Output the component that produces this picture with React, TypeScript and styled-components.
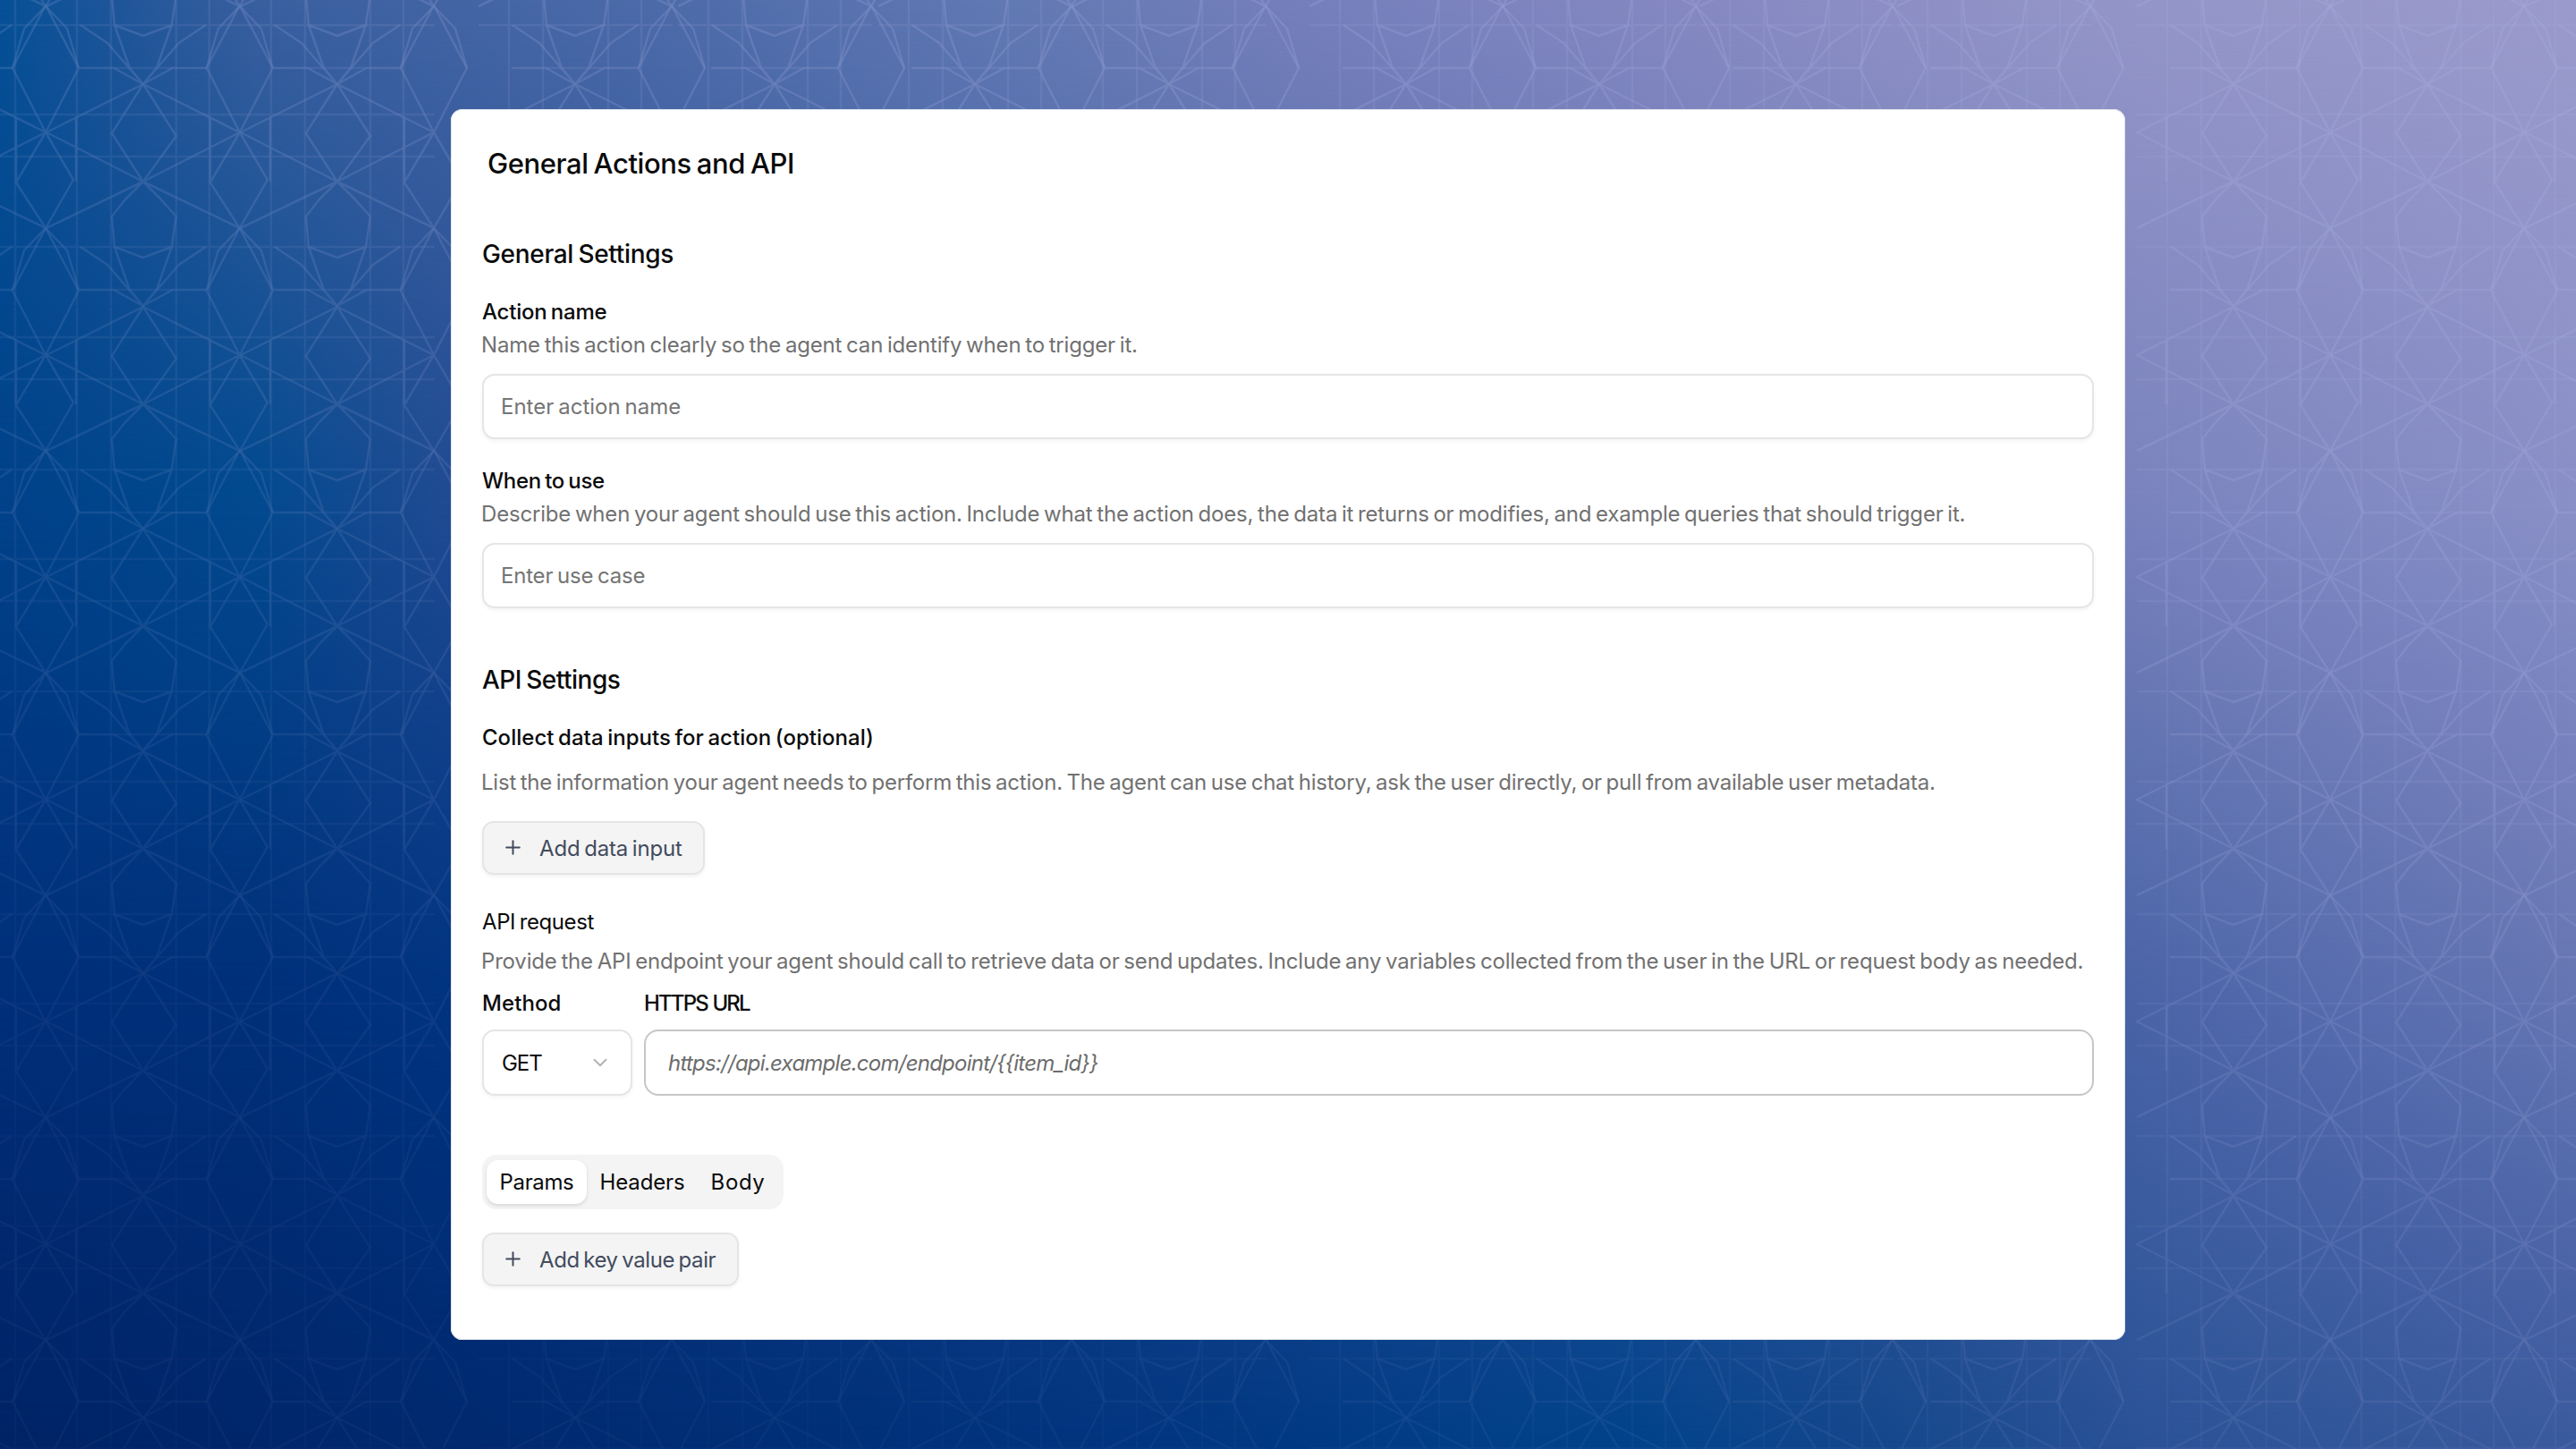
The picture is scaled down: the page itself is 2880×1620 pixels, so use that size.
import React, { useState } from "react";
import styled, { createGlobalStyle } from "styled-components";
import { ChevronDown, Plus } from "lucide-react";

const GlobalStyle = createGlobalStyle`
  * {
    box-sizing: border-box;
  }
  body {
    margin: 0;
    font-family: "Inter", sans-serif;
    font-size: 24px;
    color: #0b0b0c;
    word-spacing: -1.8px;
  }
  button,
  input {
    font: inherit;
    word-spacing: inherit;
  }
`;

const Page = styled.main`
  position: relative;
  width: 100%;
  min-width: 2880px;
  height: 1620px;
  display: flex;
  align-items: center;
  justify-content: center;
  overflow: hidden;
`;

const Backdrop = styled.div`
  position: absolute;
  inset: 0;
`;

const Wash = styled.div<{ $colors: string; $from?: number; $to?: number }>`
  position: absolute;
  inset: 0;
  background: linear-gradient(90deg, ${(props) => props.$colors});
  ${(props) =>
    props.$to &&
    `mask-image: linear-gradient(180deg, #000 ${props.$from}%, transparent ${props.$to}%);`}
`;

const Lines = styled.svg`
  position: absolute;
  inset: 0;
  width: 100%;
  height: 100%;
  fill: none;
  stroke: #a9b0e2;
  stroke-linejoin: round;
  mask-image: linear-gradient(
    20deg,
    rgba(0, 0, 0, 0.1) 15%,
    rgba(0, 0, 0, 0.24) 40%,
    rgba(0, 0, 0, 0.42) 65%,
    rgba(0, 0, 0, 0.6) 100%
  );
`;

const Card = styled.section`
  position: relative;
  display: flex;
  flex-direction: column;
  align-items: stretch;
  width: 1872px;
  height: 1376px;
  padding: 41px 35px 0;
  background: #fff;
  border-radius: 13px;
  box-shadow: inset 0 0 0 1px #dfe4ec;
`;

const Title = styled.h1`
  margin: 0 0 63px 6px;
  font-size: 31px;
  font-weight: 450;
  line-height: 40px;
  letter-spacing: -0.42px;
`;

const SectionTitle = styled.h2<{ $track: number }>`
  margin: 0 0 31px;
  font-size: 28px;
  font-weight: 450;
  line-height: 36px;
  letter-spacing: ${(props) => props.$track}px;
`;

const Label = styled.label<{ $track?: number }>`
  display: block;
  font-weight: 500;
  line-height: 32px;
  letter-spacing: ${(props) => props.$track ?? 0}px;
`;

const UrlLabel = styled(Label)`
  word-spacing: 1px;
`;

const GroupTitle = styled.h3<{ $weight: number; $track: number }>`
  margin: 0;
  font-size: 24px;
  font-weight: ${(props) => props.$weight};
  line-height: 32px;
  letter-spacing: ${(props) => props.$track}px;
`;

const Hint = styled.p<{ $track: number; $gap?: number }>`
  margin: ${(props) => props.$gap ?? 5}px 0 0 -1px;
  line-height: 32px;
  white-space: nowrap;
  color: #717171;
  letter-spacing: ${(props) => props.$track}px;
`;

const TextInput = styled.input<{ $track: number }>`
  display: block;
  width: 100%;
  height: 73px;
  margin-top: 16px;
  padding: 0 20px 0 19px;
  border: 2px solid #e5e5e5;
  border-radius: 14px;
  outline: none;
  background: #fff;
  box-shadow: 0 2px 4px rgba(0, 0, 0, 0.05);
  letter-spacing: ${(props) => props.$track}px;
  &::placeholder {
    color: #757575;
    opacity: 1;
  }
`;

const Field = styled.div<{ $gap: number }>`
  margin-bottom: ${(props) => props.$gap}px;
`;

const AddButton = styled.button<{ $width: number; $track: number }>`
  display: flex;
  align-items: center;
  flex: none;
  gap: 17px;
  width: ${(props) => props.$width}px;
  height: 60px;
  padding: 0 0 0 20px;
  border: 2px solid #e5e5e5;
  border-radius: 13px;
  background: #f4f4f4;
  box-shadow: 0 2px 4px rgba(0, 0, 0, 0.06);
  color: #424b5e;
  white-space: nowrap;
  letter-spacing: ${(props) => props.$track}px;
  svg {
    flex: none;
    margin-top: -2px;
  }
`;

const RequestRow = styled.div`
  display: grid;
  grid-template-columns: 168px 1fr;
  column-gap: 13px;
  margin: 15px 0 66px;
`;

const MethodSelect = styled.button`
  display: flex;
  align-items: center;
  justify-content: space-between;
  width: 100%;
  height: 74px;
  margin-top: 13px;
  padding: 0 21px 0 20px;
  border: 2px solid #e5e5e5;
  border-radius: 14px;
  background: #fff;
  box-shadow: 0 2px 4px rgba(0, 0, 0, 0.05);
  color: #0b0b0c;
  letter-spacing: -1.1px;
`;

const UrlInput = styled(TextInput)`
  height: 74px;
  margin-top: 13px;
  padding-left: 25px;
  border-color: #c6c6c6;
  border-radius: 16px;
  box-shadow: none;
  &::placeholder {
    font-style: italic;
    color: #6c6c6c;
  }
`;

const Tabs = styled.div`
  display: flex;
  align-self: flex-start;
  height: 61px;
  margin-bottom: 26px;
  padding: 6px 6px 6px 5px;
  border-radius: 16px;
  background: #f4f4f4;
`;

const Tab = styled.button<{ $active: boolean; $width: number; $track: number }>`
  width: ${(props) => props.$width}px;
  height: 49px;
  padding: 0;
  border: 0;
  border-radius: 13px;
  background: ${(props) => (props.$active ? "#fff" : "transparent")};
  box-shadow: ${(props) => (props.$active ? "0 2px 4px rgba(0, 0, 0, 0.12)" : "none")};
  color: #0b0b0c;
  letter-spacing: ${(props) => props.$track}px;
`;

const washes = [
  {
    colors:
      "#002366 0%, #002a70 20%, #00337c 40%, #00428a 63%, #14478c 73%, #2a5297 83%, #3a5a9e 100%",
  },
  {
    colors: "#002f79 0%, #003079 10%, #003480 17%, #4b65a7 83%, #5a6eaf 92%, #6676b4 100%",
    from: 68,
    to: 100,
  },
  {
    colors: "#00428a 0%, #00468c 5%, #024a8f 10%, #1f4b92 17%, #7b84be 83%, #8a90c7 100%",
    from: 34,
    to: 68,
  },
  {
    colors:
      "#055096 0%, #1c5599 4%, #3a5f9f 10%, #4c6aa8 25%, #6078b3 38%, #747fba 50%, #8588c1 65%, #9294c7 80%, #9a9acc 100%",
    from: 0,
    to: 34,
  },
];

// star columns are not evenly spaced, every fourth gap is wider
const columns = [-57, 160, 377, 643, 866, 1090, 1307, 1572, 1788, 2008, 2229, 2497, 2714, 2931];
const rows = [-154, 94, 343, 591, 840, 1088, 1337, 1585];

const STAR =
  "M0 0L108 54L0 109L-108 54ZM0 109L108 161M0 109L-108 161" +
  "M0 0L-35 55L0 109L37 58ZM108 54L75 110L108 161L139 107Z" +
  "M108 54L71 -18L108 -88L145 -18ZM-75 36V109M75 36V109" +
  "M0 109L-20 129L-35 148L-32 182L-15 230L0 248L15 230L32 182L37 148L20 129Z" +
  "M-32 182L0 194L32 182M0 248L-40 202L-70 182M0 248L40 202L70 182" +
  "M0 248L-33 230H-71M0 248L33 230H71M108 161L84 186L71 230M108 161L132 186L145 230";
const GRID = "M-108 182H109M-108 81H109M-108 34H109M-33 230H33M-36 0V248M37 0V248M-74 0V248M74 0V248";

const methods = ["GET", "POST", "PUT", "PATCH", "DELETE"];

const tabs = [
  { name: "Params", width: 112, track: -0.35 },
  { name: "Headers", width: 124, track: -0.13 },
  { name: "Body", width: 90, track: 0.6 },
];

const Background = () => (
  <Backdrop>
    {washes.map((wash, index) => (
      <Wash key={index} $colors={wash.colors} $from={wash.from} $to={wash.to} />
    ))}
    <Lines viewBox="0 0 2880 1620" preserveAspectRatio="xMidYMid slice">
      <defs>
        <g id="star">
          <path d={GRID} strokeWidth="2.5" opacity="0.3" />
          <path d={STAR} strokeWidth="2.5" opacity="0.48" />
        </g>
      </defs>
      {rows.map((y) => columns.map((x) => <use key={`${x}-${y}`} href="#star" x={x} y={y} />))}
    </Lines>
  </Backdrop>
);

const App = () => {
  const [active, setActive] = useState("Params");
  const [method, setMethod] = useState(0);
  return (
    <Page>
      <GlobalStyle />
      <Background />
      <Card>
        <Title>General Actions and API</Title>

        <SectionTitle $track={-0.32}>General Settings</SectionTitle>
        <Field $gap={31}>
          <Label htmlFor="name" $track={-0.23}>
            Action name
          </Label>
          <Hint $track={-0.17}>
            Name this action clearly so the agent can identify when to trigger it.
          </Hint>
          <TextInput id="name" $track={0} placeholder="Enter action name" />
        </Field>
        <Field $gap={62}>
          <Label htmlFor="usage" $track={-0.3}>
            When to use
          </Label>
          <Hint $track={-0.186}>
            Describe when your agent should use this action. Include what the action does, the data
            it returns or modifies, and example queries that should trigger it.
          </Hint>
          <TextInput id="usage" $track={-0.2} placeholder="Enter use case" />
        </Field>

        <SectionTitle $track={-0.49}>API Settings</SectionTitle>
        <Field $gap={27}>
          <GroupTitle $weight={500} $track={0.02}>
            Collect data inputs for action (optional)
          </GroupTitle>
          <Hint $track={-0.225} $gap={18}>
            List the information your agent needs to perform this action. The agent can use chat
            history, ask the user directly, or pull from available user metadata.
          </Hint>
        </Field>
        <AddButton $width={249} $track={-0.18}>
          <Plus size={25} strokeWidth={1.9} />
          Add data input
        </AddButton>

        <Request>
          <GroupTitle $weight={400} $track={-0.4}>
            API request
          </GroupTitle>
          <Hint $track={-0.18} $gap={12}>
            Provide the API endpoint your agent should call to retrieve data or send updates.
            Include any variables collected from the user in the URL or request body as needed.
          </Hint>
        </Request>
        <RequestRow>
          <div>
            <Label $track={0.08}>Method</Label>
            <MethodSelect onClick={() => setMethod((method + 1) % methods.length)}>
              {methods[method]}
              <ChevronDown size={26} strokeWidth={1.9} color="#b4b4b4" />
            </MethodSelect>
          </div>
          <div>
            <UrlLabel htmlFor="url" $track={-1.85}>
              HTTPS URL
            </UrlLabel>
            <UrlInput
              id="url"
              $track={-0.754}
              placeholder="https://api.example.com/endpoint/{{item_id}}"
            />
          </div>
        </RequestRow>

        <Tabs>
          {tabs.map((tab) => (
            <Tab
              key={tab.name}
              $active={tab.name === active}
              $width={tab.width}
              $track={tab.track}
              onClick={() => setActive(tab.name)}
            >
              {tab.name}
            </Tab>
          ))}
        </Tabs>
        <AddButton $width={287} $track={-0.41}>
          <Plus size={25} strokeWidth={1.9} />
          Add key value pair
        </AddButton>
      </Card>
    </Page>
  );
};

const Request = styled.div`
  margin-top: 37px;
`;

export default App;
